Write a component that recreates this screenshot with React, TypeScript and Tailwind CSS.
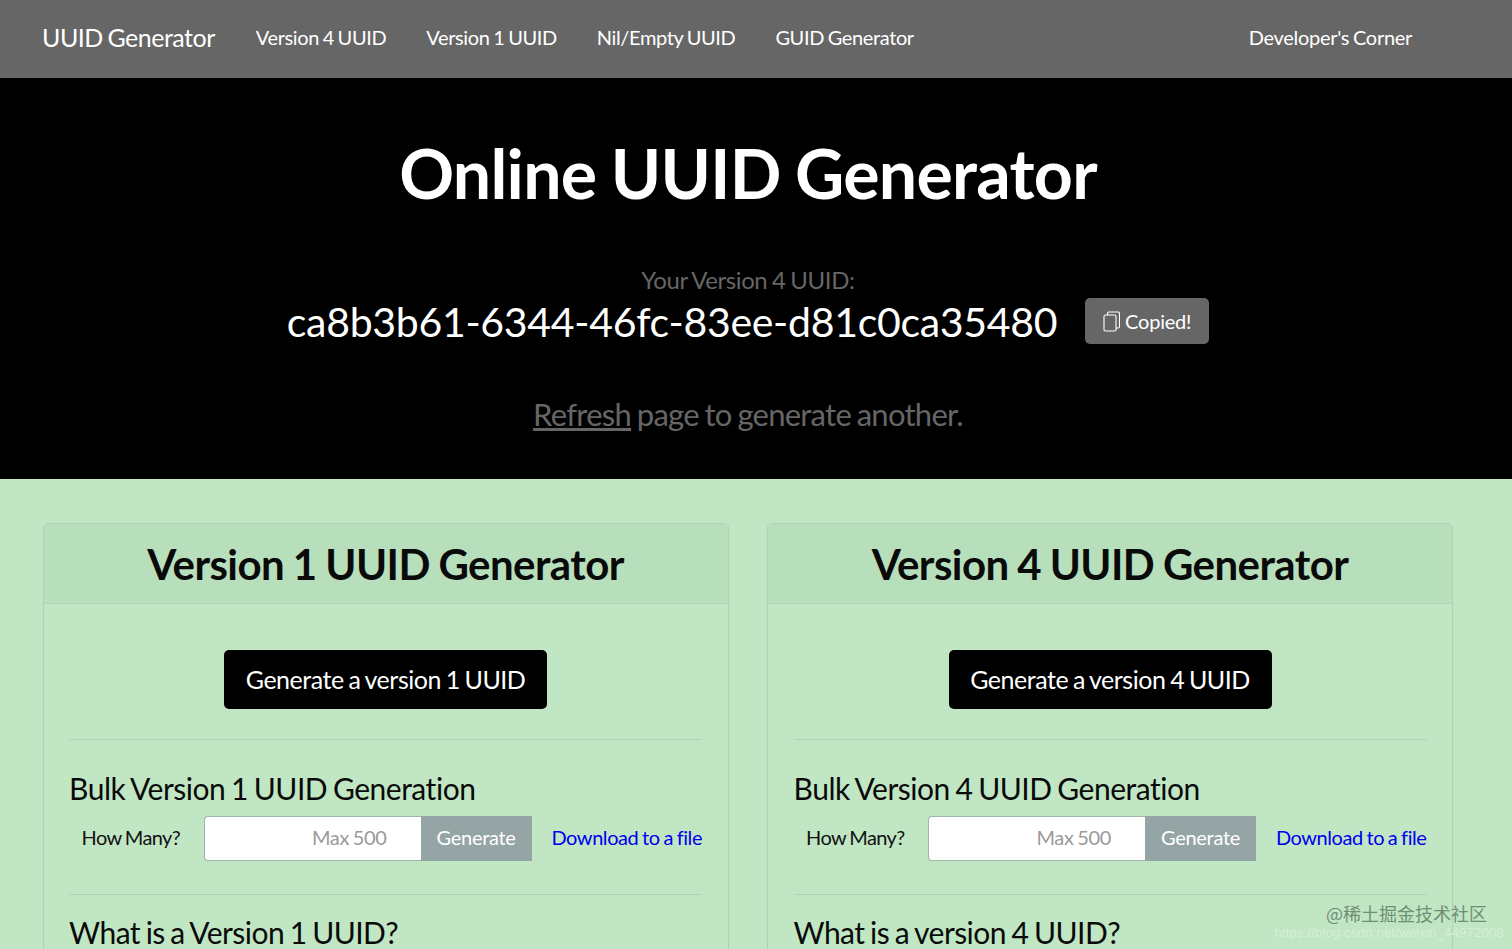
function CopyIcon() {
    return (
        <svg width="17" height="21" viewBox="0 0 17 21" fill="none" stroke="currentColor" strokeWidth="1.1" className="shrink-0">
            <rect x="1" y="4" width="12" height="16" rx="1.5" />
            <path d="M4.5 4V2.5A1.5 1.5 0 0 1 6 1h9a1.5 1.5 0 0 1 1.5 1.5v13a1.5 1.5 0 0 1-1.5 1.5h-2" />
        </svg>
    );
}

function GeneratorCard({ version, whatTitle }: { version: string; whatTitle: string }) {
    return (
        <div className="flex-1 min-w-0 rounded-[5px] border border-[#afd4b3]">
            <div className="h-[80px] flex items-center justify-center border-b border-[#afd4b3] bg-[#b8dfbc]">
                <h2 className="text-[42px] font-bold leading-none tracking-[-0.56px] [word-spacing:-1px] text-[#0a0a0a]">
                    Version {version} UUID Generator
                </h2>
            </div>
            <div className="px-[25.5px] pt-[46px]">
                <div className="flex justify-center">
                    <button className="h-[59px] w-[323px] rounded-[5px] bg-black text-[25px] tracking-[-0.47px] [word-spacing:-1.2px] text-white">
                        Generate a version {version} UUID
                    </button>
                </div>
                <hr className="mt-[30px] border-t border-[#afd4b3]" />
                <h3 className="mt-[28px] h-[40px] text-[30px] leading-[40px] tracking-[-0.47px] [word-spacing:-1.5px] text-[#0a0a0a]">
                    Bulk Version {version} UUID Generation
                </h3>
                <div className="mt-[8px] flex items-center [word-spacing:-1px]">
                    <span className="ml-[12.5px] w-[122px] pb-[3px] text-[20px] tracking-[-0.6px] text-[#111]">How Many?</span>
                    <input
                        placeholder="Max 500"
                        className="h-[45px] w-[217px] rounded-l-[4px] border border-r-0 border-[#9fb5a5] bg-white pb-[3px] pr-[34px] text-right text-[20px] tracking-[-0.35px] [word-spacing:-1px] placeholder:text-[#9a9a9a]"
                    />
                    <button className="h-[45px] w-[111px] bg-[#95a5a6] pb-[3px] text-[20px] tracking-[-0.3px] text-white">Generate</button>
                    <a href="#" className="ml-auto pb-[3px] text-[20px] tracking-[-0.42px] text-[#0000ee]">Download to a file</a>
                </div>
                <hr className="mt-[33px] border-t border-[#afd4b3]" />
                <h3 className="mt-[17px] text-[30px] leading-[40px] tracking-[-0.55px] [word-spacing:-1.5px] text-[#0a0a0a]">
                    {whatTitle}
                </h3>
            </div>
        </div>
    );
}

export default function App() {
    return (
        <div className="relative h-[949px] overflow-hidden bg-[#c1e6c4] font-['Lato',sans-serif]">
            {/* Top nav */}
            <nav className="flex h-[78px] items-center bg-[#666666] pb-[3px] pl-[42px] text-white">
                <a className="text-[25px] tracking-[-0.5px] [word-spacing:-1.2px]">UUID Generator</a>
                <div className="ml-[41px] flex gap-[40px] pb-[2px] text-[20px] tracking-[-0.38px] [word-spacing:-1px]">
                    <a>Version 4 UUID</a>
                    <a>Version 1 UUID</a>
                    <a>Nil/Empty UUID</a>
                    <a>GUID Generator</a>
                </div>
                <a className="ml-auto mr-[100px] pb-[2px] text-[20px] tracking-[-0.3px] [word-spacing:-1px]">Developer's Corner</a>
            </nav>

            {/* Hero */}
            <section className="h-[401px] bg-black pr-[16px] pt-[57px] text-center">
                <h1 className="text-[68px] font-bold leading-[76px] tracking-[-0.72px] [word-spacing:-1.5px] text-white">
                    Online UUID Generator
                </h1>
                <p className="mt-[54px] text-[24px] leading-[30px] tracking-[-0.4px] [word-spacing:-1px] text-[#666666]">
                    Your Version 4 UUID:
                </p>
                <div className="flex items-center justify-center">
                    <span className="pt-[2px] text-[41px] leading-[50px] tracking-[-0.3px] text-white">ca8b3b61-6344-46fc-83ee-d81c0ca35480</span>
                    <button className="ml-[28px] flex h-[46px] w-[124px] items-center justify-center gap-[5px] rounded-[5px] bg-[#666666] text-[20px] tracking-[-0.2px] text-white">
                        <CopyIcon />
                        Copied!
                    </button>
                </div>
                <p className="mt-[47px] text-[31px] leading-[40px] tracking-[-0.74px] [word-spacing:-1.5px] text-[#666666]">
                    <a className="underline">Refresh</a> page to generate another.
                </p>
            </section>

            {/* Cards */}
            <main className="flex gap-[38.5px] pl-[42.6px] pr-[59px] pt-[44px]">
                <GeneratorCard version="1" whatTitle="What is a Version 1 UUID?" />
                <GeneratorCard version="4" whatTitle="What is a version 4 UUID?" />
            </main>

            {/* Watermark */}
            <div className="absolute right-[25px] top-[901px] font-['Noto_Sans_CJK_SC','Lato',sans-serif] text-[18px] leading-[24px] text-[#6f8f75]">
                @稀土掘金技术社区
            </div>
            <div className="absolute right-[8px] top-[924px] font-['Liberation_Sans',sans-serif] text-[13.5px] leading-[18px] text-[#d8eeda]">
                https://blog.csdn.net/weixin_44972008
            </div>
        </div>
    );
}
